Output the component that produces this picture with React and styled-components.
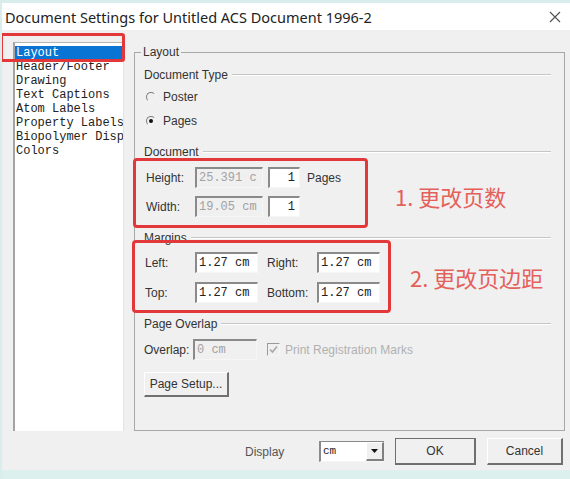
import React from 'react';
import styled, { createGlobalStyle } from 'styled-components';

const GlobalStyle = createGlobalStyle`
  html, body {
    margin: 0;
    padding: 0;
    background: #f0f0f0;
  }
  body {
    font-family: "Liberation Sans", Arial, sans-serif;
    color: #333;
  }
`;

const Window = styled.div`
  position: relative;
  width: 570px;
  height: 479px;
  box-sizing: border-box;
  display: flex;
  flex-direction: column;
  background: #f0f0f0;
  border-top: 3px solid #d9eeec;
  border-left: 2px solid #d9eeec;
  overflow: hidden;
`;

const TitleBar = styled.div`
  height: 27px;
  flex: none;
  display: flex;
  align-items: center;
  justify-content: space-between;
  padding: 0 9px 0 3px;
  background: #fff;
  font-family: "Noto Sans", "Liberation Sans", sans-serif;
  font-size: 14.5px;
  color: #222;
`;

const Body = styled.div`
  position: relative;
  height: 401px;
  flex: none;
  box-sizing: border-box;
  display: flex;
  gap: 10px;
  padding: 12px 5px 0 11px;
`;

const List = styled.div`
  width: 111px;
  height: 389px;
  flex: none;
  box-sizing: border-box;
  background: #fff;
  border-left: 2px solid #a4a4a4;
  border-top: 1px solid #b4b4b4;
  border-right: 1px solid #e4e4e4;
  padding: 3px 0 0 0;
  overflow: hidden;
`;

const ListItem = styled.div`
  width: 108px;
  height: 14px;
  padding-left: 1px;
  box-sizing: border-box;
  font-family: "Liberation Mono", "Courier New", monospace;
  font-size: 12px;
  line-height: 14px;
  white-space: nowrap;
  overflow: hidden;
  color: ${({ $selected }) => ($selected ? '#fff' : '#222')};
  background: ${({ $selected }) => ($selected ? '#0a74d4' : 'transparent')};
`;

const Callout = styled.div`
  position: absolute;
  top: 3px;
  left: -2px;
  width: 125px;
  height: 29px;
  box-sizing: border-box;
  border: 3px solid #e2383a;
  border-radius: 3px;
  pointer-events: none;
`;

const Group = styled.fieldset`
  flex: 1;
  min-width: 0;
  margin: 3px 0 0 0;
  height: 386px;
  box-sizing: border-box;
  border: 1px solid #a8a8a8;
  padding: 9px 13px 0 9px;
  display: flex;
  flex-direction: column;
  align-items: flex-start;
`;

const Legend = styled.legend`
  padding: 0 2px;
  margin-left: -3px;
  font-size: 12px;
  line-height: 14px;
  color: #333;
`;

const Heading = styled.div`
  align-self: stretch;
  display: flex;
  align-items: center;
  gap: 4px;
  height: 14px;
  font-size: 12px;
  line-height: 14px;
  color: #333;
  margin-top: ${({ $top }) => $top || 0}px;

  &::after {
    content: '';
    flex: 1;
    border-top: 1px solid #c6c6c6;
    border-bottom: 1px solid #fff;
  }
`;

const RadioRow = styled.label`
  display: flex;
  align-items: center;
  gap: 7px;
  height: 14px;
  padding-left: 2px;
  font-size: 12px;
  color: #333;
  margin-top: ${({ $top }) => $top || 0}px;
`;

const RadioDot = styled.span`
  width: 10px;
  height: 10px;
  box-sizing: border-box;
  border-radius: 50%;
  border: 1px solid;
  border-color: #7c7c7c #f4f4f4 #f4f4f4 #7c7c7c;
  display: flex;
  align-items: center;
  justify-content: center;

  &::after {
    content: '';
    width: 4px;
    height: 4px;
    border-radius: 50%;
    background: ${({ $checked }) => ($checked ? '#111' : 'transparent')};
  }
`;

const Section = styled.div`
  display: flex;
  align-items: center;
  margin-top: ${({ $top }) => $top}px;
  margin-left: ${({ $left }) => $left}px;
`;

const RedBox = styled.div`
  width: ${({ $w }) => $w}px;
  box-sizing: border-box;
  border: 3px solid #e2383a;
  border-radius: 4px;
  display: flex;
  flex-direction: column;
  gap: ${({ $gap }) => $gap}px;
  padding: ${({ $pad }) => $pad};
`;

const Row = styled.div`
  display: flex;
  align-items: center;
  height: 21px;
  margin-top: ${({ $top }) => $top || 0}px;
`;

const Label = styled.span`
  width: ${({ $w }) => $w}px;
  flex: none;
  font-size: 12px;
  color: #333;
`;

const Field = styled.div`
  width: ${({ $w }) => $w}px;
  height: 21px;
  flex: none;
  box-sizing: border-box;
  border-style: solid;
  border-width: 2px 1px 1px 2px;
  border-color: #8a8a8a #f6f6f6 #f6f6f6 #8a8a8a;
  background: ${({ $disabled }) => ($disabled ? '#f0f0f0' : '#fff')};
  color: ${({ $disabled }) => ($disabled ? '#a2a2a2' : '#222')};
  font-family: "Liberation Mono", "Courier New", monospace;
  font-size: 12px;
  line-height: 18px;
  padding: 0 4px 0 2px;
  text-align: ${({ $right }) => ($right ? 'right' : 'left')};
  white-space: nowrap;
  overflow: hidden;
  margin-right: ${({ $gap }) => $gap || 0}px;
`;

const Note = styled.span`
  font-family: "Noto Sans CJK SC", "Noto Sans", sans-serif;
  font-size: 22px;
  color: #e4605a;
  white-space: nowrap;
  margin-left: ${({ $left }) => $left}px;
  padding-top: ${({ $shift }) => $shift || 0}px;
`;

const Check = styled.span`
  width: 13px;
  height: 13px;
  flex: none;
  box-sizing: border-box;
  border-style: solid;
  border-width: 1px;
  border-color: #9a9a9a #f6f6f6 #f6f6f6 #9a9a9a;
  display: flex;
  align-items: center;
  justify-content: center;
  margin: 0 5px 0 10px;
`;

const MutedText = styled.span`
  font-size: 12px;
  color: #b0b0b0;
  white-space: nowrap;
`;

const Button = styled.button`
  width: ${({ $w }) => $w}px;
  height: ${({ $h }) => $h || 27}px;
  flex: none;
  box-sizing: border-box;
  background: #f0f0f0;
  border-style: solid;
  border-width: 1px 2px 2px 1px;
  border-color: #ffffff #707070 #707070 #ffffff;
  outline: ${({ $default }) => ($default ? '1px solid #6e6e6e' : 'none')};
  outline-offset: -1px;
  font-family: "Liberation Sans", Arial, sans-serif;
  font-size: 12px;
  color: #333;
  padding: 0;
  margin-top: ${({ $top }) => $top || 0}px;
  margin-right: ${({ $gap }) => $gap || 0}px;
`;

const Footer = styled.div`
  height: 39px;
  flex: none;
  display: flex;
  align-items: center;
  padding-left: 243px;
  padding-top: 2px;
  box-sizing: border-box;
`;

const FooterLabel = styled.span`
  width: 74px;
  font-size: 12px;
  color: #555;
`;

const Select = styled.div`
  width: 65px;
  height: 21px;
  box-sizing: border-box;
  display: flex;
  background: #fff;
  border-style: solid;
  border-width: 1px 0 1px 2px;
  border-color: #8a8a8a #f6f6f6 #f6f6f6 #8a8a8a;
  margin-right: 11px;
`;

const SelectValue = styled.span`
  flex: 1;
  font-family: "Liberation Mono", "Courier New", monospace;
  font-size: 11px;
  line-height: 19px;
  padding-left: 2px;
  color: #222;
`;

const SelectArrow = styled.span`
  width: 18px;
  box-sizing: border-box;
  border-style: solid;
  border-width: 1px 2px 2px 1px;
  border-color: #fff #808080 #808080 #fff;
  background: #f0f0f0;
  display: flex;
  align-items: center;
  justify-content: center;
`;

const BottomStrip = styled.div`
  flex: 1;
  background: #dcf0ee;
`;

const listItems = [
  'Layout',
  'Header/Footer',
  'Drawing',
  'Text Captions',
  'Atom Labels',
  'Property Labels',
  'Biopolymer Disp',
  'Colors',
];

export default function App() {
  return (
    <>
      <GlobalStyle />
      <Window>
        <TitleBar>
          <span>Document Settings for Untitled ACS Document 1996-2</span>
          <svg width="12" height="12" viewBox="0 0 12 12">
            <path d="M1 1 L11 11 M11 1 L1 11" stroke="#555" strokeWidth="1.2" fill="none" />
          </svg>
        </TitleBar>

        <Body>
          <List>
            {listItems.map((item, i) => (
              <ListItem key={item} $selected={i === 0}>
                {item}
              </ListItem>
            ))}
          </List>
          <Callout />

          <Group>
            <Legend>Layout</Legend>
            <Heading>Document Type</Heading>
            <RadioRow $top={8}>
              <RadioDot />
              Poster
            </RadioRow>
            <RadioRow $top={10}>
              <RadioDot $checked />
              Pages
            </RadioRow>

            <Heading $top={17}>Document</Heading>
            <Section $top={-1} $left={-11}>
              <RedBox $w={235} $gap={8} $pad="6px 0 8px 10px">
                <Row>
                  <Label $w={49}>Height:</Label>
                  <Field $w={68} $disabled $gap={5}>25.391 c</Field>
                  <Field $w={32} $right $gap={7}>1</Field>
                  <Label>Pages</Label>
                </Row>
                <Row>
                  <Label $w={49}>Width:</Label>
                  <Field $w={68} $disabled $gap={5}>19.05 cm</Field>
                  <Field $w={32} $right>1</Field>
                </Row>
              </RedBox>
              <Note $left={27} $shift={6}>1. 更改页数</Note>
            </Section>

            <Heading $top={3}>Margins</Heading>
            <Section $top={-5} $left={-12}>
              <RedBox $w={259} $gap={9} $pad="9px 0 7px 10px">
                <Row>
                  <Label $w={50}>Left:</Label>
                  <Field $w={63} $gap={9}>1.27 cm</Field>
                  <Label $w={50}>Right:</Label>
                  <Field $w={63}>1.27 cm</Field>
                </Row>
                <Row>
                  <Label $w={50}>Top:</Label>
                  <Field $w={63} $gap={9}>1.27 cm</Field>
                  <Label $w={50}>Bottom:</Label>
                  <Field $w={63}>1.27 cm</Field>
                </Row>
              </RedBox>
              <Note $left={19}>2. 更改页边距</Note>
            </Section>

            <Heading $top={4}>Page Overlap</Heading>
            <Row $top={8}>
              <Label $w={49}>Overlap:</Label>
              <Field $w={64} $disabled>0 cm</Field>
              <Check>
                <svg width="9" height="9" viewBox="0 0 9 9">
                  <path d="M1 4.5 L3.5 7 L8 1.5" stroke="#a8a8a8" strokeWidth="1.6" fill="none" />
                </svg>
              </Check>
              <MutedText>Print Registration Marks</MutedText>
            </Row>
            <Button $w={85} $h={25} $top={12}>Page Setup...</Button>
          </Group>
        </Body>

        <Footer>
          <FooterLabel>Display</FooterLabel>
          <Select>
            <SelectValue>cm</SelectValue>
            <SelectArrow>
              <svg width="7" height="4" viewBox="0 0 7 4">
                <path d="M0 0 L7 0 L3.5 4 Z" fill="#111" />
              </svg>
            </SelectArrow>
          </Select>
          <Button $w={81} $gap={11} $default>OK</Button>
          <Button $w={76}>Cancel</Button>
        </Footer>
        <BottomStrip />
      </Window>
    </>
  );
}
